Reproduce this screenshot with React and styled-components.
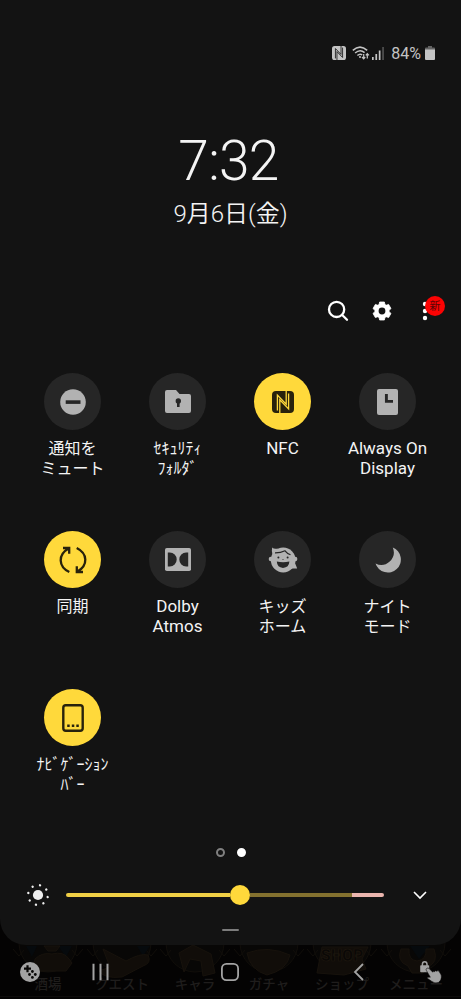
import React from 'react';
import styled, { createGlobalStyle } from 'styled-components';

const COLORS = {
  panel: '#131313',
  accent: '#ffd93b',
  circle: '#262626',
  glyph: '#b2b2b2',
  dark: '#28220c',
  text: '#f4f4f4',
  status: '#c4c4c4',
  nav: '#a3a3a3',
};

const GlobalStyle = createGlobalStyle`
  * {
    box-sizing: border-box;
  }

  body {
    margin: 0;
    background: #040303;
    font-family: Roboto, 'Noto Sans CJK JP', sans-serif;
    color: ${COLORS.text};
  }

  svg {
    display: block;
    flex: none;
  }
`;

const Screen = styled.div`
  position: relative;
  width: 461px;
  height: 999px;
  overflow: hidden;
  background: #040303;
`;

const Panel = styled.main`
  position: relative;
  display: flex;
  flex-direction: column;
  height: 945px;
  background: ${COLORS.panel};
  border-radius: 0 0 26px 26px;
`;

const StatusBar = styled.header`
  display: flex;
  justify-content: flex-end;
  align-items: center;
  height: 14px;
  margin-top: 46px;
  padding-right: 26px;
  color: ${COLORS.status};
`;

const Connection = styled.div`
  display: flex;
  align-items: center;
  gap: 2px;
  margin-left: 6px;
`;

const Percent = styled.span`
  margin: 0 4px 0 7px;
  font-size: 16px;
  line-height: 14px;
  padding-top: 2px;
`;

const Clock = styled.div`
  margin-top: 69px;
  height: 65px;
  padding-right: 4px;
  font-size: 55px;
  font-weight: 300;
  letter-spacing: -0.7px;
  line-height: 65px;
  text-align: center;
`;

const DateText = styled.div`
  margin-top: 4px;
  height: 32px;
  font-size: 24px;
  font-weight: 350;
  line-height: 32px;
  text-align: center;
`;

const Actions = styled.div`
  display: flex;
  justify-content: flex-end;
  align-items: center;
  gap: 19.5px;
  height: 24px;
  margin-top: 69px;
  padding-right: 24px;
`;

const MoreWrapper = styled.div`
  position: relative;
`;

const Badge = styled.span`
  position: absolute;
  top: -3px;
  left: 12px;
  width: 20px;
  height: 20px;
  border-radius: 50%;
  background: #fb0303;
  color: #5a0505;
  font-size: 11px;
  line-height: 21px;
  text-align: center;
`;

const TileGrid = styled.section`
  display: grid;
  grid-template-columns: repeat(4, 105px);
  grid-auto-rows: 158px;
  margin: 50px 0 0 20px;
`;

const TileWrapper = styled.div`
  display: flex;
  flex-direction: column;
  align-items: center;
`;

const Circle = styled.div`
  display: grid;
  place-items: center;
  width: 57px;
  height: 57px;
  border-radius: 50%;
  background: ${({ $on }) => ($on ? COLORS.accent : COLORS.circle)};
  color: ${({ $on }) => ($on ? COLORS.dark : COLORS.glyph)};
`;

const Label = styled.div`
  margin-top: ${({ $latin }) => ($latin ? 8 : 9)}px;
  font-size: ${({ $latin }) => ($latin ? 17 : 16)}px;
  line-height: 20px;
  text-align: center;
  white-space: pre;
`;

const Pager = styled.div`
  display: flex;
  justify-content: center;
  align-items: center;
  gap: 12px;
  height: 10px;
`;

const Dot = styled.span`
  width: 9px;
  height: 9px;
  border-radius: 50%;
  border: 2px solid ${({ $active }) => ($active ? '#fff' : '#808080')};
  background: ${({ $active }) => ($active ? '#fff' : 'transparent')};
`;

const BrightnessRow = styled.div`
  display: flex;
  align-items: center;
  height: 24px;
  margin-top: 26px;
  padding: 0 32px 0 26px;
`;

const Track = styled.div`
  display: flex;
  align-items: center;
  width: 318px;
  margin: 0 28px 0 16px;
`;

const Segment = styled.span`
  width: ${({ $width }) => $width}px;
  height: 4px;
  background: ${({ $color }) => $color};
  border-radius: ${({ $radius }) => $radius || 0};
`;

const Thumb = styled.span`
  width: 20px;
  height: 20px;
  border-radius: 50%;
  background: ${COLORS.accent};
`;

const Handle = styled.div`
  align-self: center;
  width: 17px;
  height: 2px;
  margin-top: 22px;
  border-radius: 1px;
  background: #7c7c7c;
`;

const Backdrop = styled.div`
  position: absolute;
  left: 0;
  bottom: 0;
  width: 461px;
  height: 74px;
`;

const NavBar = styled.nav`
  position: relative;
  display: grid;
  grid-template-columns: 60px 81px 177px 81px 62px;
  place-items: center;
  height: 54px;
  color: ${COLORS.nav};
`;

const NfcIcon = ({ size, hole }) => (
  <svg width={size} height={size} viewBox="0 0 22 22">
    <rect width="22" height="22" rx="4" fill="currentColor" />
    <path
      d="M5.4 19.5V4L14.2 13.2V0M16.6 2.5V18L7.8 8.8V22"
      fill="none"
      stroke={hole}
      strokeWidth="1.3"
    />
  </svg>
);

const WifiIcon = () => (
  <svg width="18" height="14" viewBox="0 0 18 14" fill="none" stroke="currentColor" strokeWidth="1.5">
    <path d="M.8 4.4Q8 -2.2 15.2 4.4M3.1 7Q8 2.6 12.6 6.6M5.4 9.5Q8 7.2 10.2 9" />
    <circle cx="8" cy="11" r="1" fill="currentColor" stroke="none" />
    <path d="M11.7 8V12.5M10 11L11.7 12.8L13.2 11M15.3 12.5V8M13.8 9.3L15.3 7.6L17 9.3" strokeWidth="1.2" />
  </svg>
);

const SignalIcon = () => (
  <svg width="12" height="13" viewBox="0 0 12 13" fill="currentColor">
    <rect y="10" width="1.7" height="3" />
    <rect x="3.4" y="7" width="1.7" height="6" />
    <rect x="6.8" y="3.5" width="1.7" height="9.5" />
    <rect x="10.2" width="1.7" height="13" opacity=".35" />
  </svg>
);

const BatteryIcon = () => (
  <svg width="10" height="14" viewBox="0 0 10 14" fill="currentColor">
    <path d="M3 0H7V1.5H9Q10 1.5 10 2.5V4H0V2.5Q0 1.5 1 1.5H3Z" opacity=".45" />
    <path d="M0 3.5H10V13Q10 14 9 14H1Q0 14 0 13Z" />
  </svg>
);

const SearchIcon = () => (
  <svg width="24" height="24" viewBox="0 0 24 24" fill="none" stroke="#fff" strokeWidth="2.3" strokeLinecap="round">
    <circle cx="10.6" cy="10.4" r="7.6" />
    <path d="M16.2 16L21 20.8" />
  </svg>
);

const GearIcon = () => (
  <svg width="24" height="24" viewBox="0 0 24 24" fill="none" stroke="#fff">
    <circle cx="12" cy="12" r="5.4" strokeWidth="4" />
    <path
      d="M9.6 3H14.4L15 6H9ZM9.6 21H14.4L15 18H9ZM3 9.6L5.4 5.4L8.3 6.5L5.3 11.6ZM21 9.6L18.6 5.4L15.7 6.5L18.7 11.6ZM3 14.4L5.4 18.6L8.3 17.5L5.3 12.4ZM21 14.4L18.6 18.6L15.7 17.5L18.7 12.4Z"
      fill="#fff"
      strokeWidth=".8"
      strokeLinejoin="round"
    />
  </svg>
);

const MoreIcon = () => (
  <svg width="24" height="24" viewBox="0 0 24 24" fill="#fff">
    <circle cx="12" cy="5" r="2.2" />
    <circle cx="12" cy="12" r="2.2" />
    <circle cx="12" cy="19" r="2.2" />
  </svg>
);

const MuteIcon = () => (
  <svg width="26" height="26" viewBox="0 0 26 26">
    <circle cx="13" cy="13" r="12.8" fill="currentColor" />
    <rect x="5.7" y="11.3" width="14.8" height="3.6" fill={COLORS.circle} />
  </svg>
);

const FolderIcon = () => (
  <svg width="26" height="23" viewBox="0 0 26 23">
    <path d="M2 0H11L14.5 4H24Q26 4 26 6V21Q26 23 24 23H2Q0 23 0 21V2Q0 0 2 0Z" fill="currentColor" />
    <circle cx="13.3" cy="11" r="2.7" fill={COLORS.circle} />
    <path d="M12 12H14.6V17H12Z" fill={COLORS.circle} />
  </svg>
);

const AlwaysOnIcon = () => (
  <svg width="21" height="26" viewBox="0 0 21 26">
    <rect width="21" height="26" rx="2" fill="currentColor" />
    <path d="M9.4 5V12.4H16" fill="none" stroke={COLORS.circle} strokeWidth="2.9" />
  </svg>
);

const SyncIcon = () => (
  <svg width="28" height="28" viewBox="0 0 28 28" fill="none" stroke="currentColor" strokeWidth="2.3">
    <path d="M10.3 26C-.8 20.5 -1.3 8.5 9.6 2.4M4 2H10.2V7.8" />
    <path d="M17.7 2C28.8 7.5 29.3 19.5 18.4 25.6M24 26H17.8V20.2" />
  </svg>
);

const DolbyIcon = () => (
  <svg width="26" height="23" viewBox="0 0 26 23">
    <rect width="26" height="23" rx="1.8" fill="currentColor" />
    <path
      d="M2.8 4.6H4.8A6.9 6.9 0 0 1 4.8 18.4H2.8ZM23.2 4.6H21.2A6.9 6.9 0 0 0 21.2 18.4H23.2Z"
      fill={COLORS.circle}
    />
  </svg>
);

const KidsIcon = () => (
  <svg width="30" height="28" viewBox="0 0 30 28">
    <g fill="currentColor">
      <circle cx="15.2" cy="14" r="12.4" />
      <circle cx="2.9" cy="13" r="2.2" />
      <circle cx="27.2" cy="13" r="2.2" />
      <path d="M4.2 1.4Q6 3.4 10 2.4L4.6 9Q3.2 5 4.2 1.4ZM27 17L29.2 22.6L21 22.6Z" />
    </g>
    <path d="M7 6.9Q12.5 7 17 4.8Q18.8 7.2 22.5 8.8" fill="none" stroke={COLORS.circle} strokeWidth="1.2" />
    <circle cx="10.4" cy="11.6" r="1" fill={COLORS.circle} />
    <circle cx="19.6" cy="11.6" r="1" fill={COLORS.circle} />
    <path d="M14.2 13H15.8L15 14ZM8.8 15.6Q15 16.8 21.4 15.6Q21 21.8 15 21.9Q9.2 21.8 8.8 15.6Z" fill={COLORS.circle} />
  </svg>
);

const MoonIcon = () => (
  <svg width="26" height="26" viewBox="0 0 26 26">
    <path d="M17.8 .5A13 13 0 1 1 .5 16.5A12.6 12.6 0 0 0 17.8 .5Z" fill="currentColor" />
  </svg>
);

const NavigationIcon = () => (
  <svg width="22" height="28" viewBox="0 0 22 28">
    <rect x="1.3" y="1.3" width="19.4" height="25.4" rx="2.5" fill="none" stroke="currentColor" strokeWidth="2.4" />
    <path d="M5.2 20.5H7.7V23H5.2ZM9.8 20.5H12.3V23H9.8ZM14.3 20.5H16.8V23H14.3Z" fill="currentColor" />
  </svg>
);

const SunIcon = () => (
  <svg width="24" height="24" viewBox="0 0 24 24" fill="#eee">
    <circle cx="12" cy="12" r="5.1" />
    {[12, 57, 102, 147, 192, 237, 282, 327].map((angle) => (
      <circle key={angle} cx="12" cy="2.1" r="1.2" transform={`rotate(${angle} 12 12)`} />
    ))}
  </svg>
);

const ChevronIcon = () => (
  <svg width="16" height="10" viewBox="0 0 16 10" fill="none" stroke="#fff" strokeWidth="1.6">
    <path d="M2 2L8 8L14 2" />
  </svg>
);

const GameIcon = () => (
  <svg width="24" height="24" viewBox="0 0 24 24">
    <circle cx="12" cy="12" r="10" fill="currentColor" />
    <path d="M9.5 5.2V12.2M6 8.7H13" stroke="#080706" strokeWidth="2.2" />
    <g fill="#080706">
      <circle cx="14.4" cy="11.5" r="1.4" />
      <circle cx="11.5" cy="14.5" r="1.4" />
      <circle cx="17.3" cy="14.5" r="1.4" />
      <circle cx="14.4" cy="17.4" r="1.4" />
    </g>
  </svg>
);

const RecentsIcon = () => (
  <svg width="18" height="18" viewBox="0 0 18 18" stroke="currentColor" strokeWidth="2">
    <path d="M1.5 .8V17.2M8.5 .8V17.2M15.5 .8V17.2" />
  </svg>
);

const HomeIcon = () => (
  <svg width="20" height="20" viewBox="0 0 20 20" fill="none" stroke="currentColor" strokeWidth="1.8">
    <rect x="1.9" y="1.9" width="16.2" height="16.2" rx="4.5" />
  </svg>
);

const BackIcon = () => (
  <svg width="12" height="18" viewBox="0 0 12 18" fill="none" stroke="currentColor" strokeWidth="1.8">
    <path d="M10 1L2 9L10 17" />
  </svg>
);

const TouchLockIcon = () => (
  <svg width="24" height="24" viewBox="0 0 24 24">
    <path d="M4.4 6V4.3Q4.4 1.7 6.7 1.7T9 4.3V6" fill="none" stroke="currentColor" strokeWidth="1.5" />
    <rect x="2.2" y="5.2" width="9" height="7" rx=".8" fill="currentColor" />
    <path
      d="M8.6 8.5Q10 7.3 11.3 8.7L14.8 12.2Q15.3 10.8 16.6 11.7Q17.2 10 18.8 11.2Q20 9.8 21.2 11.5L23.2 15Q24.2 20 20.5 22.4Q16.5 24 13.5 21.2L9.3 18.3Q9.1 16.6 12.3 17.2L8.4 10.5Q7.7 9.4 8.6 8.5Z"
      fill="currentColor"
      stroke="#080706"
      strokeWidth=".6"
    />
  </svg>
);

const MENU = [
  { name: '酒場', x: 48 },
  { name: 'クエスト', x: 122 },
  { name: 'キャラ', x: 195 },
  { name: 'ガチャ', x: 269 },
  { name: 'ショップ', x: 342 },
  { name: 'メニュー', x: 416 },
];

const GameMenu = () => (
  <Backdrop>
    <svg width="461" height="74" viewBox="0 0 461 74">
      {MENU.map(({ name, x }) => (
        <g key={name} stroke="#110e0a">
          <circle cx={x} cy="18" r="29" fill="#080706" />
          <path d={`M${x - 35} 24L${x - 29} 31L${x - 24} 25M${x + 35} 24L${x + 29} 31L${x + 24} 25`} fill="none" />
        </g>
      ))}
      <path d="M26 21H37L32 32ZM58 21H72L66 32ZM137 21H150L143 31ZM410 21H430L419 34Z" fill="#060a0d" />
      <g fill="#110d09" stroke="#17120c">
        <path d="M35 34Q42 27 52 29Q64 26 69 34L72 38L66 46H40Q32 44 35 34Z" />
        <path d="M44 21H60L56 26H48Z" />
        <path d="M103 24L126 36Q140 28 148 30Q152 38 143 41L122 52Q104 54 99 46L110 42Z" />
        <path d="M184 47L179 28L193 20L211 29L215 48L203 51L201 36L190 34Z" />
        <path d="M247 28Q268 20 290 30Q287 45 267 50Q250 45 247 28Z" />
        <path d="M322 22H368L362 34L366 44L344 50L317 48Z" />
        <path d="M401 24Q396 36 408 41L412 48H423L427 42Q439 38 434 24L426 24Q427 35 417 36Q408 35 409 24Z" />
      </g>
      <text x="342" y="36" fill="#0a0806" stroke="#1e170e" strokeWidth=".7" fontFamily="Roboto" fontSize="16" fontWeight="900" textAnchor="middle">
        SHOP
      </text>
      {MENU.map(({ name, x }) => (
        <text key={name} x={x} y="64" fill="#1f1d1c" fontFamily="'Noto Sans CJK JP', sans-serif" fontSize="13.5" fontWeight="500" textAnchor="middle">
          {name}
        </text>
      ))}
      <path d="M0 71.5H461" stroke="#0e0c0b" />
    </svg>
  </Backdrop>
);

const TILES = [
  { label: '通知を\nミュート', icon: <MuteIcon /> },
  { label: 'ｾｷｭﾘﾃｨ\nﾌｫﾙﾀﾞ', icon: <FolderIcon /> },
  { label: 'NFC', icon: <NfcIcon size={22} hole={COLORS.accent} />, on: true, latin: true },
  { label: 'Always On\nDisplay', icon: <AlwaysOnIcon />, latin: true },
  { label: '同期', icon: <SyncIcon />, on: true },
  { label: 'Dolby\nAtmos', icon: <DolbyIcon />, latin: true },
  { label: 'キッズ\nホーム', icon: <KidsIcon /> },
  { label: 'ナイト\nモード', icon: <MoonIcon /> },
  { label: 'ﾅﾋﾞｹﾞｰｼｮﾝ\nﾊﾞｰ', icon: <NavigationIcon />, on: true },
];

const Tile = ({ label, icon, on, latin }) => (
  <TileWrapper>
    <Circle $on={on}>{icon}</Circle>
    <Label $latin={latin}>{label}</Label>
  </TileWrapper>
);

const App = () => {
  return <>
    <GlobalStyle />
    <Screen>
      <GameMenu />
      <Panel>
        <StatusBar>
          <NfcIcon size={14} hole={COLORS.panel} />
          <Connection>
            <WifiIcon />
            <SignalIcon />
          </Connection>
          <Percent>84%</Percent>
          <BatteryIcon />
        </StatusBar>
        <Clock>7:32</Clock>
        <DateText>9月6日(金)</DateText>
        <Actions>
          <SearchIcon />
          <GearIcon />
          <MoreWrapper>
            <MoreIcon />
            <Badge>新</Badge>
          </MoreWrapper>
        </Actions>
        <TileGrid>
          {TILES.map((tile) => <Tile key={tile.label} {...tile} />)}
        </TileGrid>
        <Pager>
          <Dot />
          <Dot $active />
        </Pager>
        <BrightnessRow>
          <SunIcon />
          <Track>
            <Segment $width={164} $color="#f0cf45" $radius="2px 0 0 2px" />
            <Thumb />
            <Segment $width={102} $color="#83712f" />
            <Segment $width={32} $color="#eab5ae" $radius="0 2px 2px 0" />
          </Track>
          <ChevronIcon />
        </BrightnessRow>
        <Handle />
      </Panel>
      <NavBar>
        <GameIcon />
        <RecentsIcon />
        <HomeIcon />
        <BackIcon />
        <TouchLockIcon />
      </NavBar>
    </Screen>
  </>;
};

export default App;
